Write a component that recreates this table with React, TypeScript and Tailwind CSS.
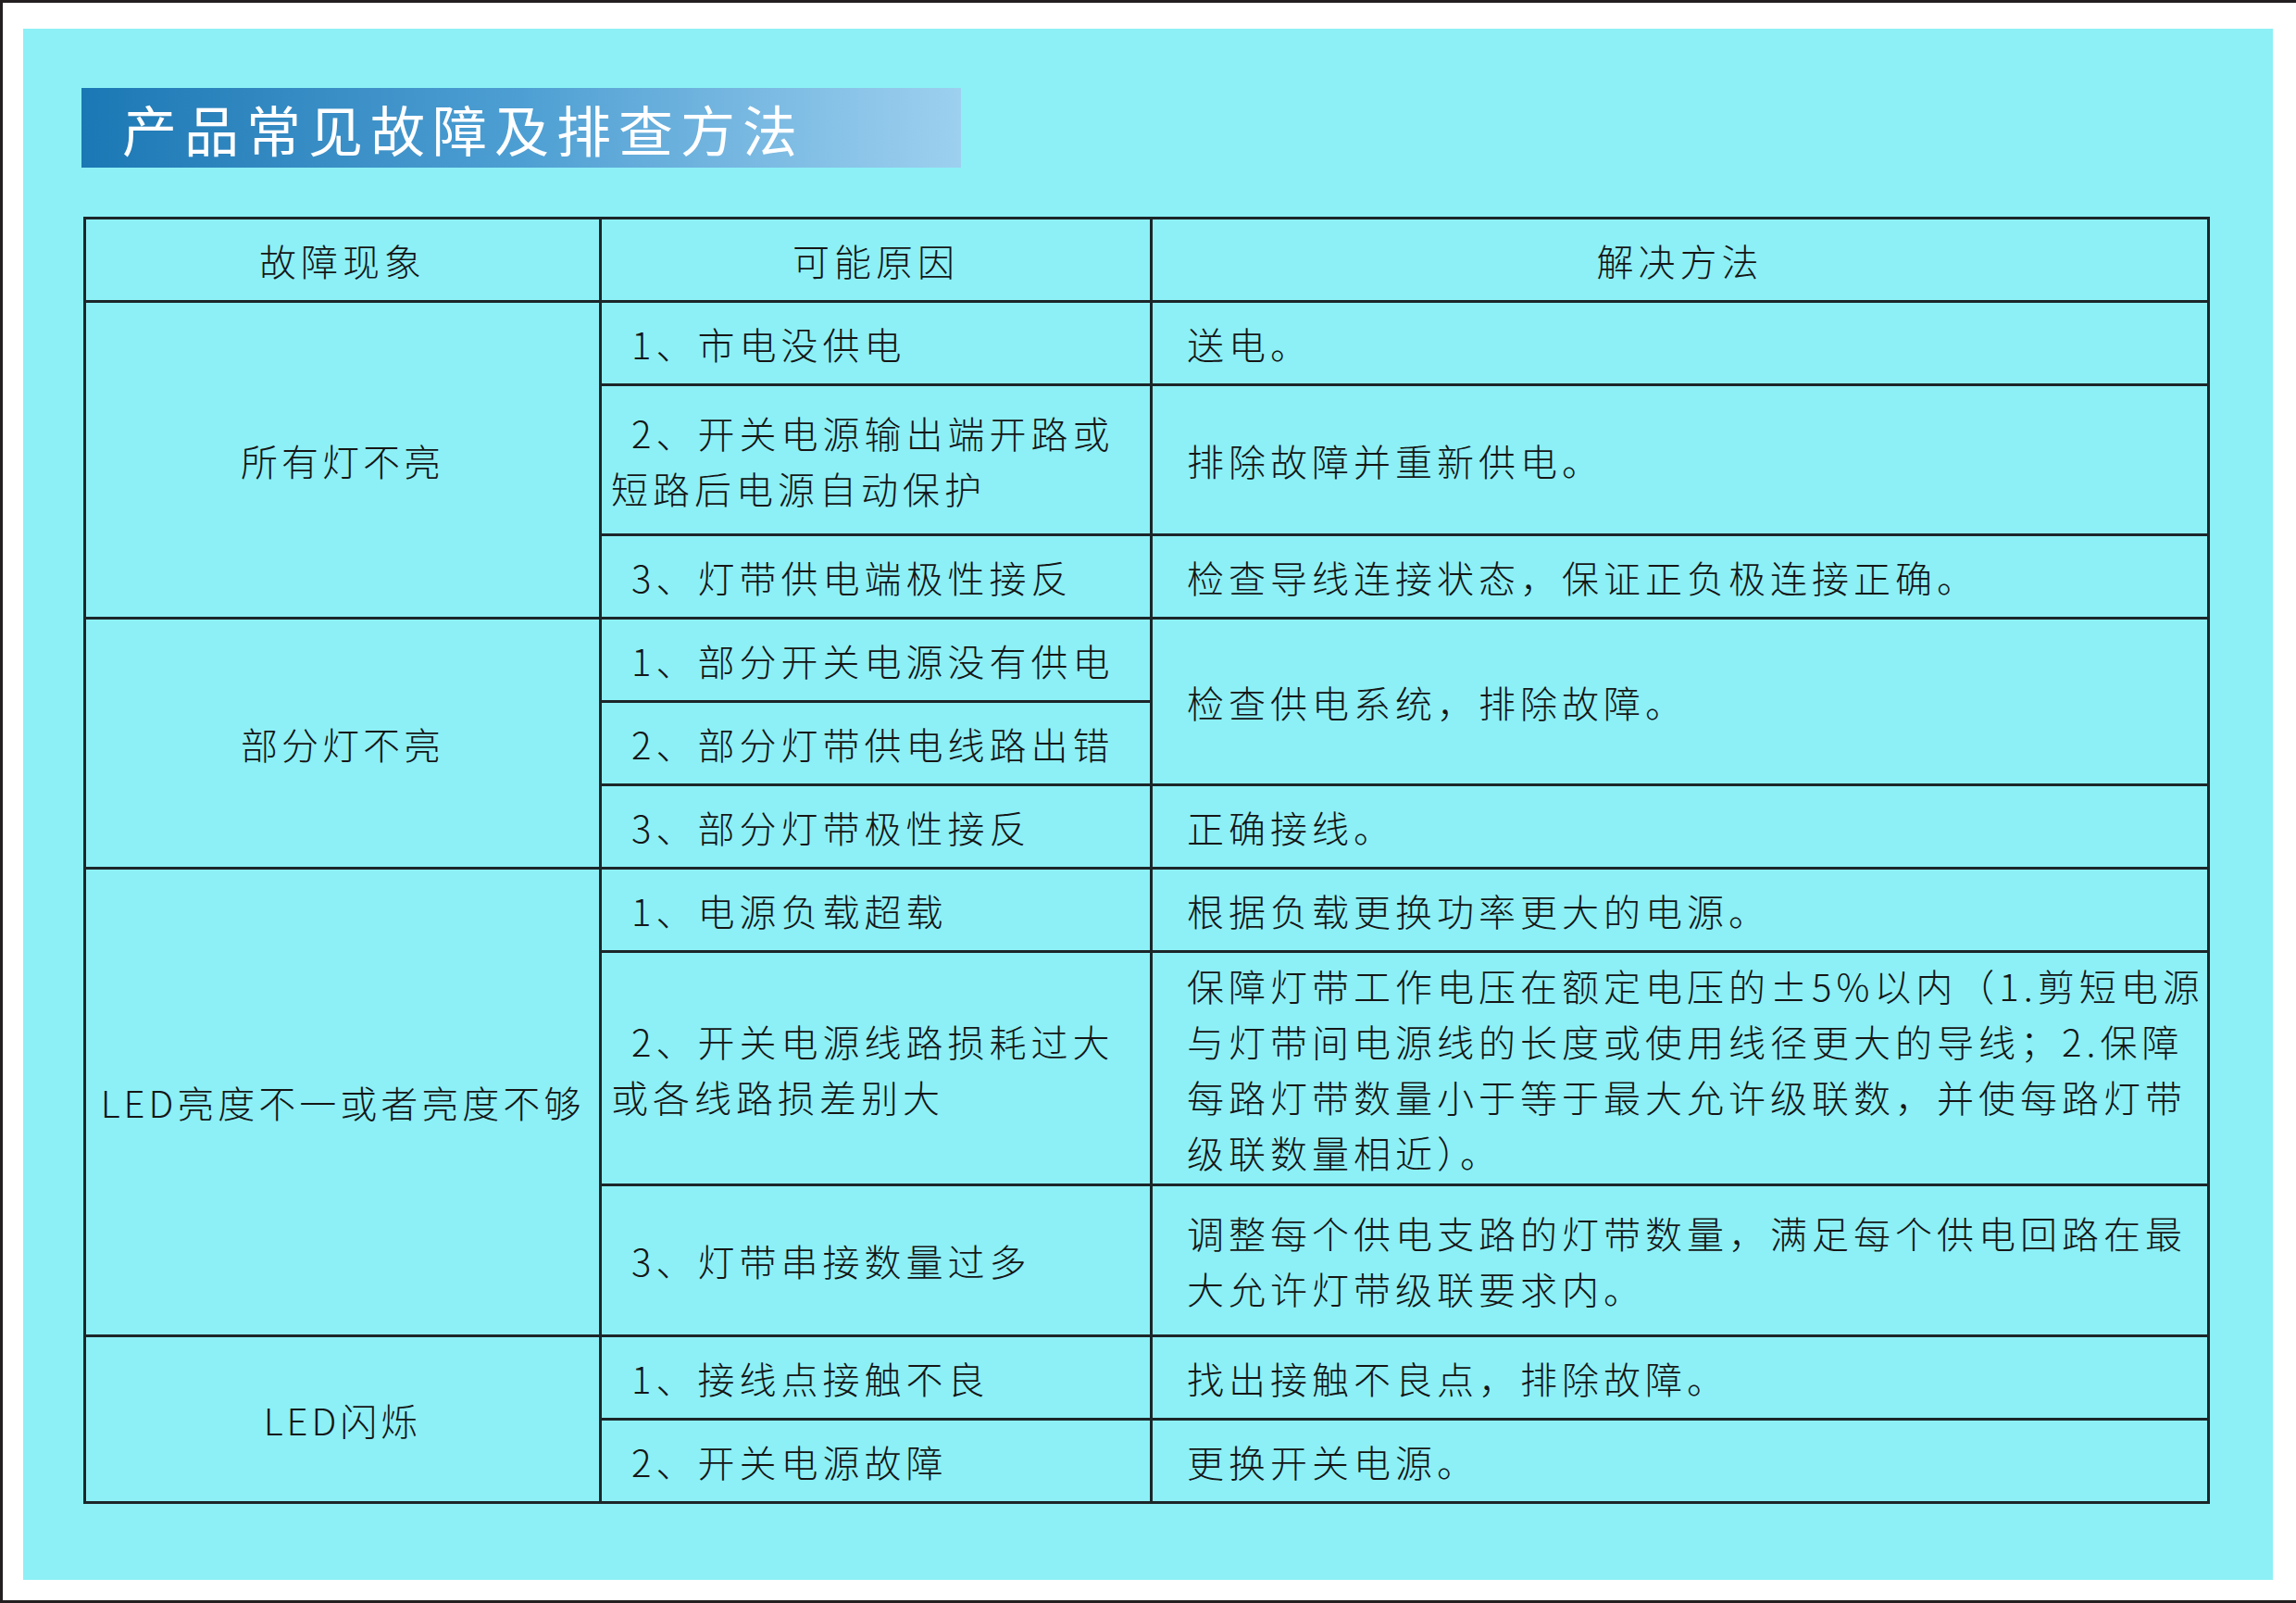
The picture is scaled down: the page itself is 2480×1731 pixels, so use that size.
import React from 'react';

// 表格行：col1 只在每组第一行出现（rowSpan），col3 可能跨两行
type Row = {
  h: number;
  cause: React.ReactNode;
  fix?: React.ReactNode;
  fixSpan?: number;
  group?: string;
  groupSpan?: number;
};

const rows: Row[] = [
  { h: 90, group: '所有灯不亮', groupSpan: 3, cause: '1、市电没供电', fix: '送电。' },
  {
    h: 162,
    cause: (
      <>
        2、开关电源输出端开路或
        <br />
        短路后电源自动保护
      </>
    ),
    fix: '排除故障并重新供电。',
  },
  { h: 90, cause: '3、灯带供电端极性接反', fix: '检查导线连接状态，保证正负极连接正确。' },
  { h: 90, group: '部分灯不亮', groupSpan: 3, cause: '1、部分开关电源没有供电', fix: '检查供电系统，排除故障。', fixSpan: 2 },
  { h: 90, cause: '2、部分灯带供电线路出错' },
  { h: 90, cause: '3、部分灯带极性接反', fix: '正确接线。' },
  { h: 90, group: 'LED亮度不一或者亮度不够', groupSpan: 3, cause: '1、电源负载超载', fix: '根据负载更换功率更大的电源。' },
  {
    h: 252,
    cause: (
      <>
        2、开关电源线路损耗过大
        <br />
        或各线路损差别大
      </>
    ),
    fix: (
      <>
        保障灯带工作电压在额定电压的±5%以内（1.剪短电源
        <br />
        与灯带间电源线的长度或使用线径更大的导线；2.保障
        <br />
        每路灯带数量小于等于最大允许级联数，并使每路灯带
        <br />
        级联数量相近）。
      </>
    ),
  },
  {
    h: 163,
    cause: '3、灯带串接数量过多',
    fix: (
      <>
        调整每个供电支路的灯带数量，满足每个供电回路在最
        <br />
        大允许灯带级联要求内。
      </>
    ),
  },
  { h: 90, group: 'LED闪烁', groupSpan: 2, cause: '1、接线点接触不良', fix: '找出接触不良点，排除故障。' },
  { h: 90, cause: '2、开关电源故障', fix: '更换开关电源。' },
];

const cell = 'border-[3px] border-[#1c2629] align-middle';

export default function App() {
  return (
    <div className="w-[2480px] h-[1731px] bg-white border-t-[3px] border-l-[3px] border-b-[3px] border-[#231f20] pt-[28px] pl-[22px] pr-[25px] pb-[22px] font-['Noto_Sans_CJK_SC','Noto_Sans',sans-serif]">
      <div className="w-full h-full bg-[#8cf0f6] pt-[64px] pl-[63px]">
        {/* 标题条 */}
        <div className="w-[950px] h-[86px] flex items-center pl-[44px] bg-gradient-to-r from-[#1a78b4] via-[#4d9fd3] to-[#9dd0ef]">
          <h1 className="text-white text-[59px] font-normal tracking-[8px] leading-none">产品常见故障及排查方法</h1>
        </div>

        <table className="mt-[53px] ml-[2px] w-[2294px] table-fixed border-collapse text-[#161616] text-[40px] font-light tracking-[5px] leading-[60px]">
          <colgroup>
            <col className="w-[557px]" />
            <col className="w-[595px]" />
            <col className="w-[1142px]" />
          </colgroup>
          <thead>
            <tr className="h-[90px]">
              <th className={`${cell} font-light text-center`}>故障现象</th>
              <th className={`${cell} font-light text-center`}>可能原因</th>
              <th className={`${cell} font-light text-center`}>解决方法</th>
            </tr>
          </thead>
          <tbody>
            {rows.map((r, i) => (
              <tr key={i} style={{ height: r.h }}>
                {r.group && (
                  <td rowSpan={r.groupSpan} className={`${cell} text-center whitespace-nowrap tracking-[4px]`}>
                    {r.group}
                  </td>
                )}
                <td className={`${cell} text-left pl-[10px] indent-[22px] whitespace-nowrap`}>{r.cause}</td>
                {r.fix && (
                  <td rowSpan={r.fixSpan} className={`${cell} text-left pl-[37px] whitespace-nowrap`}>
                    {r.fix}
                  </td>
                )}
              </tr>
            ))}
          </tbody>
        </table>
      </div>
    </div>
  );
}
